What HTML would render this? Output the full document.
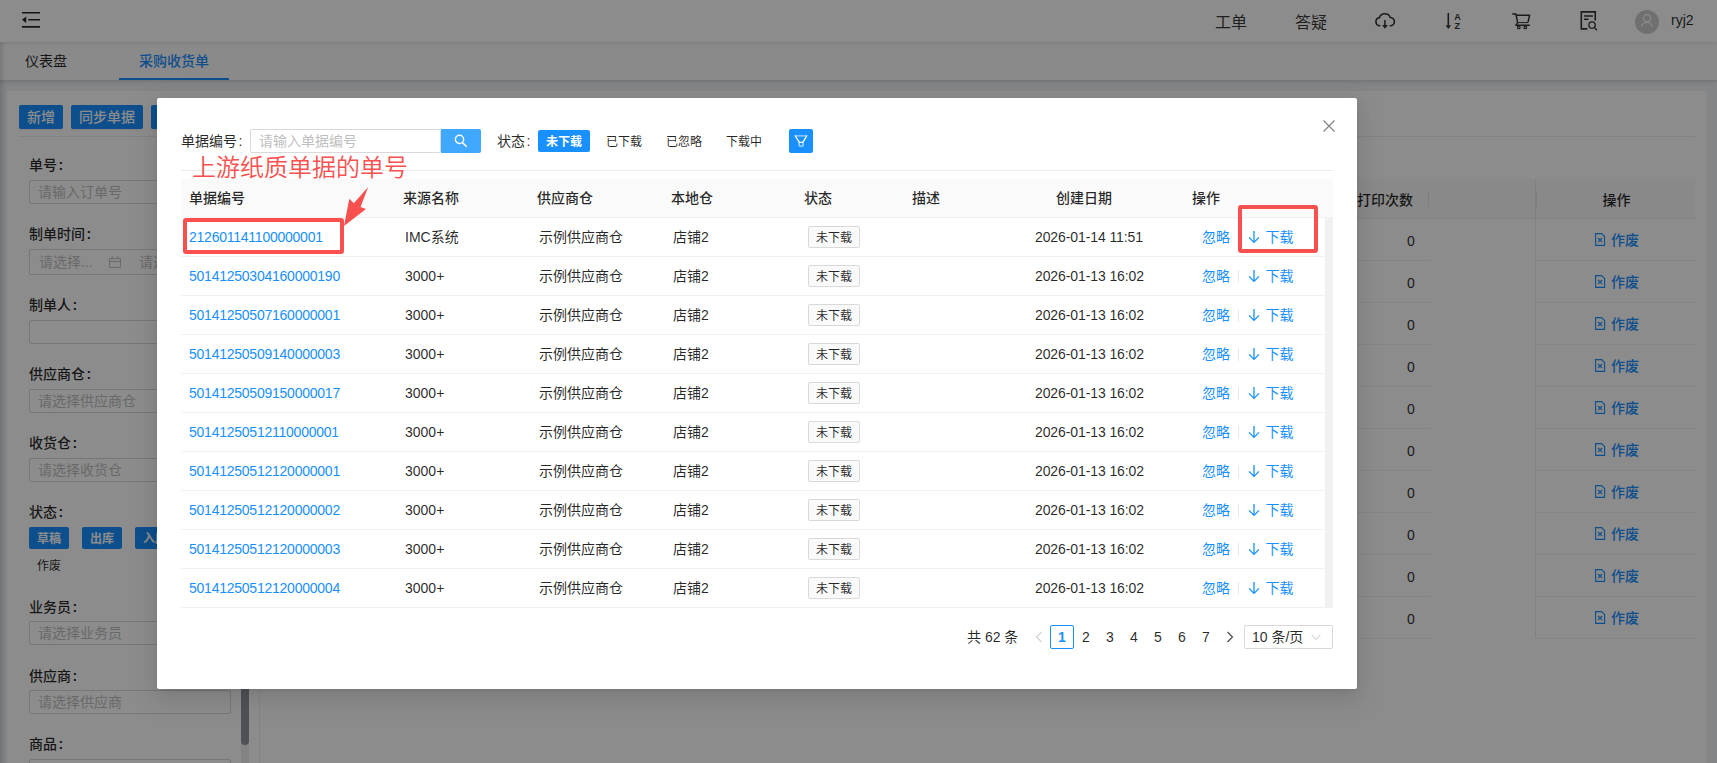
<!DOCTYPE html>
<html lang="zh-CN">
<head>
<meta charset="utf-8">
<title>采购收货单</title>
<style>
*{box-sizing:border-box;margin:0;padding:0}
html,body{width:1717px;height:763px;overflow:hidden}
body{font-family:"Liberation Sans","Noto Sans CJK SC",sans-serif;font-size:14px;color:rgba(0,0,0,.85);background:#f0f2f5;position:relative}
svg{display:block}
#hdr{position:absolute;left:0;top:0;width:1717px;height:42px;background:#fff;box-shadow:0 1px 4px rgba(0,21,41,.12);z-index:2}
#tabs{position:absolute;left:0;top:42px;width:1717px;height:39px;background:#fcfcfc;border-bottom:1px solid #d8d8d8;box-shadow:0 1px 4px rgba(0,0,0,.13);z-index:1}
#lgrad{position:absolute;left:0;top:42px;width:7px;height:721px;background:linear-gradient(to right,rgba(0,0,0,.14),rgba(0,0,0,.05) 45%,rgba(0,0,0,0));z-index:3}
#mask{position:absolute;left:0;top:0;width:1717px;height:763px;background:rgba(0,0,0,.45);z-index:5}
#modal{position:absolute;left:157px;top:98px;width:1200px;height:591px;background:#fff;border-radius:2px;z-index:10;box-shadow:0 3px 6px -4px rgba(0,0,0,.12),0 6px 16px rgba(0,0,0,.08),0 9px 28px 8px rgba(0,0,0,.05)}
#modal .m{position:absolute;white-space:nowrap}
.t14{font-size:14px;line-height:22px;color:rgba(0,0,0,.85)}
.sinp{width:191px;height:24px;border:1px solid #d9d9d9;border-radius:2px;color:#bfbfbf;font-size:14px;line-height:22px;padding-left:8px}
.sbtn{width:40px;height:24px;background:#40a9ff;border-radius:0 2px 2px 0;padding:4px 0 0 12px}
.fbtn{width:24px;height:24px;background:#1890ff;border-radius:2px}
.ctag{height:22px;line-height:24px;font-size:12px;padding:0 8px;border-radius:2px;color:rgba(0,0,0,.85)}
.ctag.on{background:#1890ff;color:#fff;font-weight:bold}
.anno{font-size:24px;line-height:34px;color:#f8504f;margin-top:1px;font-weight:350}
.thead{width:1152px;height:39px;background:#fafafa;border-bottom:1px solid #f0f0f0}
.th{font-weight:500;font-size:14px;line-height:38px;color:rgba(0,0,0,.85)}
.row{left:24px;width:1144px;height:39px;border-bottom:1px solid #f0f0f0}
.row .c{position:absolute;top:0;line-height:38px;font-size:14px;white-space:nowrap}
.row .lnk{color:#1890ff}
.row .no{letter-spacing:-0.24px}
.row .rtag{position:absolute;top:8px;width:52px;height:22px;line-height:22px;font-size:12px;text-align:center;border:1px solid #d9d9d9;border-radius:2px;background:#fafafa;color:rgba(0,0,0,.85)}
.row .vd{position:absolute;top:13px;width:1px;height:13px;background:#e8e8e8}
.row .dl{position:absolute;top:12px}
.rbox{border:4px solid #f8504f;border-radius:3px}
.pcur{width:24px;height:24px;border:1px solid #1890ff;border-radius:2px;color:#1890ff;text-align:center;line-height:22px;font-size:14px;font-weight:bold}
.pnum{width:24px;height:24px;text-align:center;line-height:24px;font-size:14px}
.psel{width:89px;height:24px;border:1px solid #d9d9d9;border-radius:2px;line-height:22px;font-size:14px;padding-left:7px}
.psel svg{position:absolute;right:11px;top:8px}
.row .dt{letter-spacing:-0.1px}
.ab{position:absolute;white-space:nowrap}
#hdr .ht{top:0;line-height:45px;font-size:16px;color:rgba(0,0,0,.8)}
#tabs .tab{top:0;line-height:39px;font-size:14px;color:rgba(0,0,0,.85)}
#tabs .act{color:#1890ff;font-weight:500}
#card{position:absolute;left:7px;top:91px;width:1700px;height:700px;background:#fff}
.btn{top:14px;height:24px;line-height:24px;background:#1890ff;color:#fff;border-radius:2px;font-size:14px;text-align:center;font-weight:500;box-shadow:0 2px 0 rgba(0,0,0,.045)}
.lbl{left:22px;margin-top:-1px;font-size:14px;font-weight:500;line-height:22px;color:rgba(0,0,0,.85)}
.inp{left:22px;width:202px;height:24px;border:1px solid #d9d9d9;border-radius:2px;background:#fff;color:#bfbfbf;line-height:22px;padding-left:8px;font-size:14px;overflow:hidden}
.tag{height:22px;line-height:24px;font-size:12px;border-radius:2px;width:40px;text-align:center;color:rgba(0,0,0,.85)}
.tag.on{background:#1890ff;color:#fff;font-weight:bold}
.rth{font-weight:500;line-height:39px;font-size:14px;color:rgba(0,0,0,.85)}
.rrow{left:253px;width:1435px;height:42px;line-height:41px;font-size:14px}
.rrow .bl{top:41px;height:1px;background:#f0f0f0}
.rrow .lk{color:#1890ff;font-weight:500}
.cl{margin-left:1.5px}
.lbl .cl{font-weight:bold}
</style>
</head>
<body>
<div id="hdr">
<svg class="ab" style="left:22px;top:12px" width="18" height="16" viewBox="0 0 18 16"><path d="M0 0.7 H18 M6.3 7.8 H18 M0 14.9 H18" stroke="#262626" stroke-width="1.6" fill="none"/><path d="M4.2 4.6 V11 L0 7.8 Z" fill="#262626"/></svg>
<div class="ab ht" style="left:1215px">工单</div>
<div class="ab ht" style="left:1295px">答疑</div>
<svg class="ab" style="left:1374px;top:12px" width="22" height="18" viewBox="0 0 22 18"><path d="M6.4 13.75 H5.9 A4 4 0 0 1 5.3 5.8 A5.85 5.85 0 0 1 16.3 5.5 A4.1 4.1 0 0 1 16.2 13.75 H15.6" fill="none" stroke="#333" stroke-width="1.6"/><path d="M10.9 7.9 V13.5" fill="none" stroke="#333" stroke-width="1.5"/><path d="M8.1 13 H13.9 L10.9 16.8 Z" fill="#333"/></svg>
<svg class="ab" style="left:1444px;top:12px" width="18" height="18" viewBox="0 0 18 18"><path d="M4.3 1 V13.6" fill="none" stroke="#333" stroke-width="1.6"/><path d="M1.5 13.2 H7.1 L4.3 16.9 Z" fill="#333"/><text x="13.4" y="7.6" text-anchor="middle" font-family="Liberation Sans, sans-serif" font-size="9" font-weight="bold" fill="#333">A</text><text x="13.3" y="17" text-anchor="middle" font-family="Liberation Sans, sans-serif" font-size="9" font-weight="bold" fill="#333">Z</text></svg>
<svg class="ab" style="left:1511px;top:12px" width="20" height="18" viewBox="0 0 20 18"><path d="M1.3 2 H4.9 L6.6 10.4" fill="none" stroke="#333" stroke-width="1.5" stroke-linejoin="round"/><path d="M5.4 3.2 H18.6 L17 10.4" fill="none" stroke="#333" stroke-width="1.5" stroke-linejoin="round"/><path d="M6.6 10.6 H17" stroke="#333" stroke-width="1" fill="none"/><path d="M6.6 10.6 L4.9 13.3 H18.9" fill="none" stroke="#333" stroke-width="1.5" stroke-linejoin="round"/><circle cx="7.8" cy="15.4" r="1.3" fill="none" stroke="#333" stroke-width="1.2"/><circle cx="14.3" cy="15.4" r="1.3" fill="none" stroke="#333" stroke-width="1.2"/></svg>
<svg class="ab" style="left:1579px;top:10px" width="20" height="22" viewBox="0 0 20 22"><path d="M8.4 18.9 H2.3 V1.9 H16.25 V10.5" fill="none" stroke="#333" stroke-width="1.6"/><path d="M5.1 6 H13.9 M5.1 9.25 H9.5" stroke="#333" stroke-width="1.5" fill="none"/><circle cx="13.05" cy="15.1" r="3.2" fill="none" stroke="#333" stroke-width="1.3"/><path d="M15.3 17.4 L17.9 20.4" stroke="#333" stroke-width="1.4" fill="none"/></svg>
<div class="ab" style="left:1635px;top:10px;width:24px;height:24px;border-radius:12px;background:#ccc;overflow:hidden"><svg width="24" height="24" viewBox="0 0 24 24"><circle cx="12" cy="8.2" r="3.6" fill="none" stroke="#fff" stroke-width="1.1"/><path d="M6.5 16.9 A5.7 5.7 0 0 1 17.6 16.9" fill="none" stroke="#fff" stroke-width="1.1"/></svg></div>
<div class="ab" style="left:1671px;top:0;line-height:40px;font-size:14px;color:rgba(0,0,0,.85)">ryj2</div>
</div>
<div id="tabs">
<div class="ab tab" style="left:25px">仪表盘</div>
<div class="ab tab act" style="left:139px">采购收货单</div>
<div class="ab" style="left:119px;top:36px;width:110px;height:2px;background:#1890ff"></div>
</div>
<div id="card">
<div class="ab btn" style="left:12px;width:44px">新增</div>
<div class="ab btn" style="left:64px;width:72px">同步单据</div>
<div class="ab btn" style="left:144px;width:72px">批量操作</div>
<div class="ab" style="left:12px;top:45px;width:1676px;height:1px;background:#ededed"></div>
<!-- left filter panel -->
<div class="ab lbl" style="top:64px">单号<span class="cl">:</span></div>
<div class="ab inp" style="top:89px">请输入订单号</div>
<div class="ab lbl" style="top:133px">制单时间<span class="cl">:</span></div>
<div class="ab inp" style="top:158px;height:26px;padding-left:9px;line-height:24px">请选择...<svg class="ab" style="left:79px;top:6px" width="12" height="12" viewBox="0 0 12 12"><path d="M0.6 2.6 H11.4 V11.4 H0.6 Z M0.6 5.4 H11.4 M3.2 0 V2.6 M8.8 0 V2.6" fill="none" stroke="#bfbfbf" stroke-width="1"/></svg><span class="ab" style="left:109px;top:0">请选择...</span></div>
<div class="ab lbl" style="top:204px">制单人<span class="cl">:</span></div>
<div class="ab inp" style="top:229px"></div>
<div class="ab lbl" style="top:273px">供应商仓<span class="cl">:</span></div>
<div class="ab inp" style="top:298px">请选择供应商仓</div>
<div class="ab lbl" style="top:342px">收货仓<span class="cl">:</span></div>
<div class="ab inp" style="top:367px">请选择收货仓</div>
<div class="ab lbl" style="top:411px">状态<span class="cl">:</span></div>
<div class="ab tag on" style="left:22px;top:436px">草稿</div>
<div class="ab tag on" style="left:75px;top:436px">出库</div>
<div class="ab tag on" style="left:128px;top:436px">入库</div>
<div class="ab tag" style="left:22px;top:463px">作废</div>
<div class="ab lbl" style="top:506px">业务员<span class="cl">:</span></div>
<div class="ab inp" style="top:530px">请选择业务员</div>
<div class="ab lbl" style="top:575px">供应商<span class="cl">:</span></div>
<div class="ab inp" style="top:599px">请选择供应商</div>
<div class="ab lbl" style="top:643px">商品<span class="cl">:</span></div>
<div class="ab inp" style="top:668px">请选择商品</div>
<div class="ab" style="left:234px;top:88px;width:8px;height:600px;background:#f0f0f0"></div>
<div class="ab" style="left:234px;top:88px;width:8px;height:566px;background:#8f959e;border-radius:4px"></div>
<!-- right table -->
<div class="ab" style="left:252px;top:88px;width:1px;height:600px;background:#f0f0f0"></div>
<div class="ab" style="left:253px;top:88px;width:1435px;height:40px;background:#fafafa;border-bottom:1px solid #f0f0f0"></div>
<div class="ab rth" style="left:1350px;top:90px">打印次数</div>
<div class="ab" style="left:1421px;top:101px;width:1px;height:15px;background:#e4e4e4"></div>
<div class="ab" style="left:1529px;top:101px;width:1px;height:15px;background:#e4e4e4"></div>
<div class="ab rth" style="left:1530px;top:90px;width:159px;text-align:center">操作</div>
<div class="ab" style="left:1528px;top:88px;width:1px;height:459px;background:#ebebeb"></div>
<div class="ab rrow" style="top:128px"><div class="ab bl" style="left:0;width:1170px"></div><div class="ab bl" style="left:1276px;width:159px"></div><span class="ab" style="left:1144px;top:2px;width:14px;text-align:center">0</span><svg class="ab" style="left:1335px;top:14px" width="11" height="13" viewBox="0 0 11 13"><path d="M0.6 0.6 H6.6 L9.6 3.6 V12.4 H0.6 Z" fill="none" stroke="#1890ff" stroke-width="1.1"/><path d="M3 5 L7.2 9.2 M7.2 5 L3 9.2" stroke="#1890ff" stroke-width="1.1" fill="none"/></svg><span class="ab lk" style="left:1351px;top:1px">作废</span></div>
<div class="ab rrow" style="top:170px"><div class="ab bl" style="left:0;width:1170px"></div><div class="ab bl" style="left:1276px;width:159px"></div><span class="ab" style="left:1144px;top:2px;width:14px;text-align:center">0</span><svg class="ab" style="left:1335px;top:14px" width="11" height="13" viewBox="0 0 11 13"><path d="M0.6 0.6 H6.6 L9.6 3.6 V12.4 H0.6 Z" fill="none" stroke="#1890ff" stroke-width="1.1"/><path d="M3 5 L7.2 9.2 M7.2 5 L3 9.2" stroke="#1890ff" stroke-width="1.1" fill="none"/></svg><span class="ab lk" style="left:1351px;top:1px">作废</span></div>
<div class="ab rrow" style="top:212px"><div class="ab bl" style="left:0;width:1170px"></div><div class="ab bl" style="left:1276px;width:159px"></div><span class="ab" style="left:1144px;top:2px;width:14px;text-align:center">0</span><svg class="ab" style="left:1335px;top:14px" width="11" height="13" viewBox="0 0 11 13"><path d="M0.6 0.6 H6.6 L9.6 3.6 V12.4 H0.6 Z" fill="none" stroke="#1890ff" stroke-width="1.1"/><path d="M3 5 L7.2 9.2 M7.2 5 L3 9.2" stroke="#1890ff" stroke-width="1.1" fill="none"/></svg><span class="ab lk" style="left:1351px;top:1px">作废</span></div>
<div class="ab rrow" style="top:254px"><div class="ab bl" style="left:0;width:1170px"></div><div class="ab bl" style="left:1276px;width:159px"></div><span class="ab" style="left:1144px;top:2px;width:14px;text-align:center">0</span><svg class="ab" style="left:1335px;top:14px" width="11" height="13" viewBox="0 0 11 13"><path d="M0.6 0.6 H6.6 L9.6 3.6 V12.4 H0.6 Z" fill="none" stroke="#1890ff" stroke-width="1.1"/><path d="M3 5 L7.2 9.2 M7.2 5 L3 9.2" stroke="#1890ff" stroke-width="1.1" fill="none"/></svg><span class="ab lk" style="left:1351px;top:1px">作废</span></div>
<div class="ab rrow" style="top:296px"><div class="ab bl" style="left:0;width:1170px"></div><div class="ab bl" style="left:1276px;width:159px"></div><span class="ab" style="left:1144px;top:2px;width:14px;text-align:center">0</span><svg class="ab" style="left:1335px;top:14px" width="11" height="13" viewBox="0 0 11 13"><path d="M0.6 0.6 H6.6 L9.6 3.6 V12.4 H0.6 Z" fill="none" stroke="#1890ff" stroke-width="1.1"/><path d="M3 5 L7.2 9.2 M7.2 5 L3 9.2" stroke="#1890ff" stroke-width="1.1" fill="none"/></svg><span class="ab lk" style="left:1351px;top:1px">作废</span></div>
<div class="ab rrow" style="top:338px"><div class="ab bl" style="left:0;width:1170px"></div><div class="ab bl" style="left:1276px;width:159px"></div><span class="ab" style="left:1144px;top:2px;width:14px;text-align:center">0</span><svg class="ab" style="left:1335px;top:14px" width="11" height="13" viewBox="0 0 11 13"><path d="M0.6 0.6 H6.6 L9.6 3.6 V12.4 H0.6 Z" fill="none" stroke="#1890ff" stroke-width="1.1"/><path d="M3 5 L7.2 9.2 M7.2 5 L3 9.2" stroke="#1890ff" stroke-width="1.1" fill="none"/></svg><span class="ab lk" style="left:1351px;top:1px">作废</span></div>
<div class="ab rrow" style="top:380px"><div class="ab bl" style="left:0;width:1170px"></div><div class="ab bl" style="left:1276px;width:159px"></div><span class="ab" style="left:1144px;top:2px;width:14px;text-align:center">0</span><svg class="ab" style="left:1335px;top:14px" width="11" height="13" viewBox="0 0 11 13"><path d="M0.6 0.6 H6.6 L9.6 3.6 V12.4 H0.6 Z" fill="none" stroke="#1890ff" stroke-width="1.1"/><path d="M3 5 L7.2 9.2 M7.2 5 L3 9.2" stroke="#1890ff" stroke-width="1.1" fill="none"/></svg><span class="ab lk" style="left:1351px;top:1px">作废</span></div>
<div class="ab rrow" style="top:422px"><div class="ab bl" style="left:0;width:1170px"></div><div class="ab bl" style="left:1276px;width:159px"></div><span class="ab" style="left:1144px;top:2px;width:14px;text-align:center">0</span><svg class="ab" style="left:1335px;top:14px" width="11" height="13" viewBox="0 0 11 13"><path d="M0.6 0.6 H6.6 L9.6 3.6 V12.4 H0.6 Z" fill="none" stroke="#1890ff" stroke-width="1.1"/><path d="M3 5 L7.2 9.2 M7.2 5 L3 9.2" stroke="#1890ff" stroke-width="1.1" fill="none"/></svg><span class="ab lk" style="left:1351px;top:1px">作废</span></div>
<div class="ab rrow" style="top:464px"><div class="ab bl" style="left:0;width:1170px"></div><div class="ab bl" style="left:1276px;width:159px"></div><span class="ab" style="left:1144px;top:2px;width:14px;text-align:center">0</span><svg class="ab" style="left:1335px;top:14px" width="11" height="13" viewBox="0 0 11 13"><path d="M0.6 0.6 H6.6 L9.6 3.6 V12.4 H0.6 Z" fill="none" stroke="#1890ff" stroke-width="1.1"/><path d="M3 5 L7.2 9.2 M7.2 5 L3 9.2" stroke="#1890ff" stroke-width="1.1" fill="none"/></svg><span class="ab lk" style="left:1351px;top:1px">作废</span></div>
<div class="ab rrow" style="top:506px"><div class="ab bl" style="left:0;width:1170px"></div><div class="ab bl" style="left:1276px;width:159px"></div><span class="ab" style="left:1144px;top:2px;width:14px;text-align:center">0</span><svg class="ab" style="left:1335px;top:14px" width="11" height="13" viewBox="0 0 11 13"><path d="M0.6 0.6 H6.6 L9.6 3.6 V12.4 H0.6 Z" fill="none" stroke="#1890ff" stroke-width="1.1"/><path d="M3 5 L7.2 9.2 M7.2 5 L3 9.2" stroke="#1890ff" stroke-width="1.1" fill="none"/></svg><span class="ab lk" style="left:1351px;top:1px">作废</span></div>
</div>

<div id="lgrad"></div>
<div id="mask"></div>
<div id="modal">
<div class="m t14" style="left:24px;top:32px">单据编号<span class="cl">:</span></div>
<div class="m sinp" style="left:93px;top:31px">请输入单据编号</div>
<div class="m sbtn" style="left:284px;top:31px"><svg width="16" height="16" viewBox="0 0 16 16"><circle cx="6.5" cy="6.4" r="4.1" fill="none" stroke="#fff" stroke-width="1.4"/><path d="M9.5 9.6 L13.7 13.7" stroke="#fff" stroke-width="1.5" fill="none"/></svg></div>
<div class="m t14" style="left:340px;top:32px">状态<span class="cl">:</span></div>
<div class="m ctag on" style="left:381px;top:32px">未下载</div>
<div class="m ctag" style="left:441px;top:32px">已下载</div>
<div class="m ctag" style="left:501px;top:32px">已忽略</div>
<div class="m ctag" style="left:561px;top:32px">下载中</div>
<div class="m fbtn" style="left:632px;top:31px"><svg width="24" height="24" viewBox="0 0 24 24"><path d="M6.2 6.9 H17.8" stroke="#fff" stroke-opacity=".75" stroke-width="1" fill="none"/><path d="M6.2 6.9 L10.4 13.3 H13.8 L17.8 6.9" fill="none" stroke="#fff" stroke-width="1.3" stroke-linejoin="round" stroke-linecap="round"/><path d="M10.1 13.6 V16.2 Q10.1 17.2 11.1 17.2 H13.1 Q14.1 17.2 14.1 16.2 V13.6" fill="none" stroke="#fff" stroke-opacity=".7" stroke-width="1.3"/></svg></div>
<div class="m" style="left:24px;top:72px;width:1152px;height:1px;background:#ececec"></div>
<div class="m anno" style="left:35px;top:52px">上游纸质单据的单号</div>
<div class="m thead" style="left:24px;top:81px"></div>
<div class="m th" style="left:32px;top:81px">单据编号</div>
<div class="m th" style="left:246px;top:81px">来源名称</div>
<div class="m th" style="left:380px;top:81px">供应商仓</div>
<div class="m th" style="left:514px;top:81px">本地仓</div>
<div class="m th" style="left:647px;top:81px">状态</div>
<div class="m th" style="left:755px;top:81px">描述</div>
<div class="m th" style="left:899px;top:81px">创建日期</div>
<div class="m th" style="left:1035px;top:81px">操作</div>
<div class="m" style="left:1168px;top:120px;width:8px;height:390px;background:#f1f1f1"></div>
<div class="m row" style="top:120px">
<span class="c lnk no" style="left:8px">212601141100000001</span>
<span class="c" style="left:224px">IMC系统</span>
<span class="c" style="left:358px">示例供应商仓</span>
<span class="c" style="left:492px">店铺2</span>
<span class="rtag" style="left:627px">未下载</span>
<span class="c dt" style="left:854px">2026-01-14 11:51</span>
<span class="c lnk" style="left:1021px">忽略</span>
<svg class="dl" style="left:1067px" width="12" height="14" viewBox="0 0 12 14"><path d="M6 1 V12.2 M1 7.4 L6 12.4 L11 7.4" fill="none" stroke="#1890ff" stroke-width="1.3"/></svg>
<span class="c lnk" style="left:1084.5px">下载</span>
</div>
<div class="m row" style="top:159px">
<span class="c lnk no" style="left:8px">50141250304160000190</span>
<span class="c" style="left:224px">3000+</span>
<span class="c" style="left:358px">示例供应商仓</span>
<span class="c" style="left:492px">店铺2</span>
<span class="rtag" style="left:627px">未下载</span>
<span class="c dt" style="left:854px">2026-01-13 16:02</span>
<span class="c lnk" style="left:1021px">忽略</span>
<span class="vd" style="left:1057px"></span>
<svg class="dl" style="left:1067px" width="12" height="14" viewBox="0 0 12 14"><path d="M6 1 V12.2 M1 7.4 L6 12.4 L11 7.4" fill="none" stroke="#1890ff" stroke-width="1.3"/></svg>
<span class="c lnk" style="left:1084.5px">下载</span>
</div>
<div class="m row" style="top:198px">
<span class="c lnk no" style="left:8px">50141250507160000001</span>
<span class="c" style="left:224px">3000+</span>
<span class="c" style="left:358px">示例供应商仓</span>
<span class="c" style="left:492px">店铺2</span>
<span class="rtag" style="left:627px">未下载</span>
<span class="c dt" style="left:854px">2026-01-13 16:02</span>
<span class="c lnk" style="left:1021px">忽略</span>
<span class="vd" style="left:1057px"></span>
<svg class="dl" style="left:1067px" width="12" height="14" viewBox="0 0 12 14"><path d="M6 1 V12.2 M1 7.4 L6 12.4 L11 7.4" fill="none" stroke="#1890ff" stroke-width="1.3"/></svg>
<span class="c lnk" style="left:1084.5px">下载</span>
</div>
<div class="m row" style="top:237px">
<span class="c lnk no" style="left:8px">50141250509140000003</span>
<span class="c" style="left:224px">3000+</span>
<span class="c" style="left:358px">示例供应商仓</span>
<span class="c" style="left:492px">店铺2</span>
<span class="rtag" style="left:627px">未下载</span>
<span class="c dt" style="left:854px">2026-01-13 16:02</span>
<span class="c lnk" style="left:1021px">忽略</span>
<span class="vd" style="left:1057px"></span>
<svg class="dl" style="left:1067px" width="12" height="14" viewBox="0 0 12 14"><path d="M6 1 V12.2 M1 7.4 L6 12.4 L11 7.4" fill="none" stroke="#1890ff" stroke-width="1.3"/></svg>
<span class="c lnk" style="left:1084.5px">下载</span>
</div>
<div class="m row" style="top:276px">
<span class="c lnk no" style="left:8px">50141250509150000017</span>
<span class="c" style="left:224px">3000+</span>
<span class="c" style="left:358px">示例供应商仓</span>
<span class="c" style="left:492px">店铺2</span>
<span class="rtag" style="left:627px">未下载</span>
<span class="c dt" style="left:854px">2026-01-13 16:02</span>
<span class="c lnk" style="left:1021px">忽略</span>
<span class="vd" style="left:1057px"></span>
<svg class="dl" style="left:1067px" width="12" height="14" viewBox="0 0 12 14"><path d="M6 1 V12.2 M1 7.4 L6 12.4 L11 7.4" fill="none" stroke="#1890ff" stroke-width="1.3"/></svg>
<span class="c lnk" style="left:1084.5px">下载</span>
</div>
<div class="m row" style="top:315px">
<span class="c lnk no" style="left:8px">50141250512110000001</span>
<span class="c" style="left:224px">3000+</span>
<span class="c" style="left:358px">示例供应商仓</span>
<span class="c" style="left:492px">店铺2</span>
<span class="rtag" style="left:627px">未下载</span>
<span class="c dt" style="left:854px">2026-01-13 16:02</span>
<span class="c lnk" style="left:1021px">忽略</span>
<span class="vd" style="left:1057px"></span>
<svg class="dl" style="left:1067px" width="12" height="14" viewBox="0 0 12 14"><path d="M6 1 V12.2 M1 7.4 L6 12.4 L11 7.4" fill="none" stroke="#1890ff" stroke-width="1.3"/></svg>
<span class="c lnk" style="left:1084.5px">下载</span>
</div>
<div class="m row" style="top:354px">
<span class="c lnk no" style="left:8px">50141250512120000001</span>
<span class="c" style="left:224px">3000+</span>
<span class="c" style="left:358px">示例供应商仓</span>
<span class="c" style="left:492px">店铺2</span>
<span class="rtag" style="left:627px">未下载</span>
<span class="c dt" style="left:854px">2026-01-13 16:02</span>
<span class="c lnk" style="left:1021px">忽略</span>
<span class="vd" style="left:1057px"></span>
<svg class="dl" style="left:1067px" width="12" height="14" viewBox="0 0 12 14"><path d="M6 1 V12.2 M1 7.4 L6 12.4 L11 7.4" fill="none" stroke="#1890ff" stroke-width="1.3"/></svg>
<span class="c lnk" style="left:1084.5px">下载</span>
</div>
<div class="m row" style="top:393px">
<span class="c lnk no" style="left:8px">50141250512120000002</span>
<span class="c" style="left:224px">3000+</span>
<span class="c" style="left:358px">示例供应商仓</span>
<span class="c" style="left:492px">店铺2</span>
<span class="rtag" style="left:627px">未下载</span>
<span class="c dt" style="left:854px">2026-01-13 16:02</span>
<span class="c lnk" style="left:1021px">忽略</span>
<span class="vd" style="left:1057px"></span>
<svg class="dl" style="left:1067px" width="12" height="14" viewBox="0 0 12 14"><path d="M6 1 V12.2 M1 7.4 L6 12.4 L11 7.4" fill="none" stroke="#1890ff" stroke-width="1.3"/></svg>
<span class="c lnk" style="left:1084.5px">下载</span>
</div>
<div class="m row" style="top:432px">
<span class="c lnk no" style="left:8px">50141250512120000003</span>
<span class="c" style="left:224px">3000+</span>
<span class="c" style="left:358px">示例供应商仓</span>
<span class="c" style="left:492px">店铺2</span>
<span class="rtag" style="left:627px">未下载</span>
<span class="c dt" style="left:854px">2026-01-13 16:02</span>
<span class="c lnk" style="left:1021px">忽略</span>
<span class="vd" style="left:1057px"></span>
<svg class="dl" style="left:1067px" width="12" height="14" viewBox="0 0 12 14"><path d="M6 1 V12.2 M1 7.4 L6 12.4 L11 7.4" fill="none" stroke="#1890ff" stroke-width="1.3"/></svg>
<span class="c lnk" style="left:1084.5px">下载</span>
</div>
<div class="m row" style="top:471px">
<span class="c lnk no" style="left:8px">50141250512120000004</span>
<span class="c" style="left:224px">3000+</span>
<span class="c" style="left:358px">示例供应商仓</span>
<span class="c" style="left:492px">店铺2</span>
<span class="rtag" style="left:627px">未下载</span>
<span class="c dt" style="left:854px">2026-01-13 16:02</span>
<span class="c lnk" style="left:1021px">忽略</span>
<span class="vd" style="left:1057px"></span>
<svg class="dl" style="left:1067px" width="12" height="14" viewBox="0 0 12 14"><path d="M6 1 V12.2 M1 7.4 L6 12.4 L11 7.4" fill="none" stroke="#1890ff" stroke-width="1.3"/></svg>
<span class="c lnk" style="left:1084.5px">下载</span>
</div>
<div class="m rbox" style="left:26px;top:120px;width:161px;height:36px"></div>
<div class="m rbox" style="left:1081px;top:107px;width:80px;height:48px"></div>
<svg class="m" style="left:183px;top:87px" width="40" height="50" viewBox="0 0 40 50"><path d="M28.2 2.0 L13.8 18.3 L9.3 13.8 L4.0 41.0 L26.0 24.0 L20.5 21.9 Z" fill="#f8504f"/></svg>
<div class="m t14 pg" style="left:810px;top:528px">共 62 条</div>
<svg class="m" style="left:878px;top:533px" width="8" height="12" viewBox="0 0 8 12"><path d="M6.5 1 L1.5 6 L6.5 11" fill="none" stroke="#d0d0d0" stroke-width="1.1"/></svg>
<div class="m pcur" style="left:893px;top:527px">1</div>
<div class="m pnum" style="left:917px;top:527px">2</div>
<div class="m pnum" style="left:941px;top:527px">3</div>
<div class="m pnum" style="left:965px;top:527px">4</div>
<div class="m pnum" style="left:989px;top:527px">5</div>
<div class="m pnum" style="left:1013px;top:527px">6</div>
<div class="m pnum" style="left:1037px;top:527px">7</div>
<svg class="m" style="left:1069px;top:533px" width="8" height="12" viewBox="0 0 8 12"><path d="M1.5 1 L6.5 6 L1.5 11" fill="none" stroke="#444" stroke-width="1.1"/></svg>
<div class="m psel" style="left:1087px;top:527px">10 条/页<svg width="10" height="7" viewBox="0 0 10 7"><path d="M0.7 0.8 L5 5.6 L9.3 0.8" fill="none" stroke="#c4c4c4" stroke-width="1"/></svg></div>
<svg class="m" style="left:1165px;top:21px" width="14" height="14" viewBox="0 0 14 14"><path d="M1.5 1.5 L12.5 12.5 M12.5 1.5 L1.5 12.5" stroke="#868686" stroke-width="1.3" fill="none"/></svg>
</div>
</body>
</html>
